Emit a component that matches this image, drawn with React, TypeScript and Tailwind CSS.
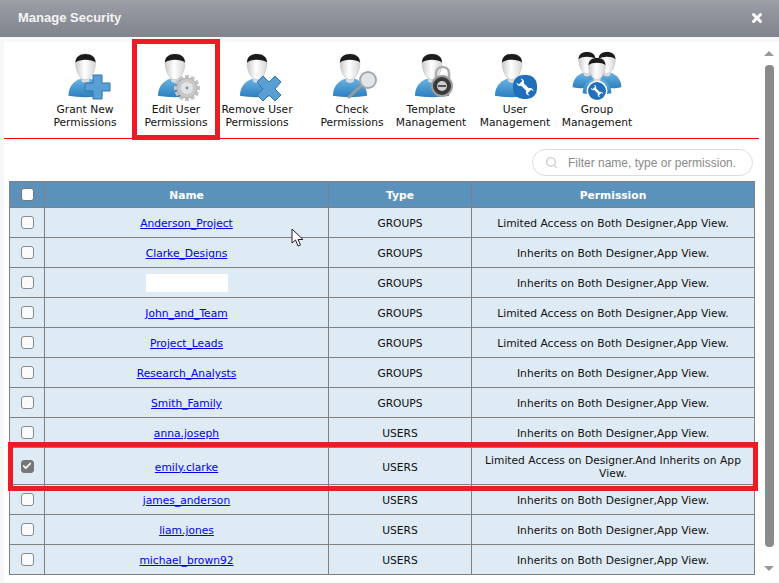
import { Search, Check, X } from 'lucide-react';
import type { ReactNode } from 'react';

const rows = [
  { name: 'Anderson_Project', type: 'GROUPS', permission: 'Limited Access on Both Designer,App View.' },
  { name: 'Clarke_Designs', type: 'GROUPS', permission: 'Inherits on Both Designer,App View.' },
  { name: '', type: 'GROUPS', permission: 'Inherits on Both Designer,App View.' },
  { name: 'John_and_Team', type: 'GROUPS', permission: 'Limited Access on Both Designer,App View.' },
  { name: 'Project_Leads', type: 'GROUPS', permission: 'Limited Access on Both Designer,App View.' },
  { name: 'Research_Analysts', type: 'GROUPS', permission: 'Inherits on Both Designer,App View.' },
  { name: 'Smith_Family', type: 'GROUPS', permission: 'Inherits on Both Designer,App View.' },
  { name: 'anna.joseph', type: 'USERS', permission: 'Inherits on Both Designer,App View.' },
  { name: 'emily.clarke', type: 'USERS', permission: 'Limited Access on Designer.And Inherits on App View.', checked: true },
  { name: 'james_anderson', type: 'USERS', permission: 'Inherits on Both Designer,App View.' },
  { name: 'liam.jones', type: 'USERS', permission: 'Inherits on Both Designer,App View.' },
  { name: 'michael_brown92', type: 'USERS', permission: 'Inherits on Both Designer,App View.' },
];

function Person({ x = 25, y = 5, scale = 0.95 }: { x?: number; y?: number; scale?: number }) {
  return (
    <g transform={`translate(${x} ${y}) scale(${scale})`}>
      <path d="M-18 44 C-18 32 -9 26 0 25 C9 26 18 32 18 44 C8 46 -8 46 -18 44Z" fill="url(#personBlue)" />
      <path d="M-5 20 L-4 29 C-2 31 2 31 4 29 L5 20Z" fill="#d9dcdf" />
      <path d="M-10.5 9 C-10.5 3 -6 0 0 0 C6 0 10.5 3 10.5 9 C10.5 18 6 27 0 27 C-6 27 -10.5 18 -10.5 9Z" fill="url(#personHead)" stroke="#b5b5b5" strokeWidth="0.5" />
      <path d="M-10.5 9 C-10.5 3 -6 0 0 0 C6 0 10.5 3 10.5 9 C6 5 -6 5 -10.5 9Z" fill="#1d1a1a" />
    </g>
  );
}

function Defs() {
  return (
    <defs>
      <linearGradient id="personBlue" x1="0" y1="0" x2="0" y2="1">
        <stop offset="0" stopColor="#6fb4e2" />
        <stop offset="1" stopColor="#2a7fc0" />
      </linearGradient>
      <linearGradient id="personHead" x1="0" y1="0" x2="1" y2="0">
        <stop offset="0" stopColor="#c9cbcc" />
        <stop offset="0.45" stopColor="#ffffff" />
        <stop offset="1" stopColor="#d5d6d7" />
      </linearGradient>
    </defs>
  );
}

function IconBox({ children }: { children: ReactNode }) {
  return (
    <svg width="54" height="50" viewBox="0 0 54 50" className="mx-auto block overflow-visible">
      <Defs />
      {children}
    </svg>
  );
}

function Wrench({ cx, cy, s }: { cx: number; cy: number; s: number }) {
  return (
    <g transform={`translate(${cx} ${cy}) rotate(-45) scale(${s})`}>
      <path
        d="M-2 -4 C-5 -5 -5 -9 -3 -10 L-3 -7 L3 -7 L3 -10 C5 -9 5 -5 2 -4 L2 4 C5 5 5 9 3 10 L3 7 L-3 7 L-3 10 C-5 9 -5 5 -2 4Z"
        fill="#fff"
      />
    </g>
  );
}

const gearTeeth = [0, 30, 60, 90, 120, 150, 180, 210, 240, 270, 300, 330];

const icons: Record<string, ReactNode> = {
  grant: (
    <IconBox>
      <Person x={27.5} />
      <path d="M35 26 H44 V34 H52 V42 H44 V50 H35 V42 H27 V34 H35Z" fill="#5a9fd4" stroke="#2f76ad" strokeWidth="1" />
    </IconBox>
  ),
  edit: (
    <IconBox>
      <Person x={26} />
      {gearTeeth.map((a) => (
        <rect key={a} x="36" y="26" width="4" height="4" fill="#c4c4c4" transform={`rotate(${a} 38 39)`} />
      ))}
      <circle cx="38" cy="39" r="10" fill="#c9c9c9" stroke="#a9a9a9" strokeWidth="0.8" />
      <circle cx="38" cy="39" r="6" fill="#e4e4e4" />
      <circle cx="38" cy="39" r="1.4" fill="#6a93b8" />
    </IconBox>
  ),
  remove: (
    <IconBox>
      <Person x={27} />
      <path d="M33 27 L39 33 L45 27 L51 33 L45 40 L51 46 L45 52 L39 46 L33 52 L27 46 L33 40 L27 33Z" fill="#5a9fd4" stroke="#2f76ad" strokeWidth="1" />
    </IconBox>
  ),
  check: (
    <IconBox>
      <Person x={25} />
      <path d="M24 48 L36 37" stroke="#9a9a9a" strokeWidth="3" strokeLinecap="round" />
      <circle cx="43" cy="31" r="8" fill="#dfe6ec" stroke="#a8a8a8" strokeWidth="2" />
    </IconBox>
  ),
  template: (
    <IconBox>
      <Person x={28} />
      <path d="M32 30 V24 C32 16 45 16 45 24 V30" fill="none" stroke="#aeaeae" strokeWidth="2.5" />
      <circle cx="38" cy="37" r="10" fill="#3a3a3a" stroke="#9d9d9d" strokeWidth="2" />
      <circle cx="38" cy="37" r="5" fill="#cfcfcf" />
      <rect x="34" y="36" width="8" height="2" fill="#555" />
    </IconBox>
  ),
  user: (
    <IconBox>
      <Person x={24} />
      <rect x="25" y="26" width="24" height="24" rx="10" fill="#1f6fbb" />
      <Wrench cx={37} cy={38} s={0.9} />
    </IconBox>
  ),
  group: (
    <IconBox>
      <Person x={17} y={3} scale={0.8} />
      <Person x={37} y={3} scale={0.8} />
      <Person x={27} y={9} scale={0.8} />
      <circle cx="27" cy="42" r="10.5" fill="#fff" />
      <circle cx="27" cy="42" r="9" fill="#1f6fbb" />
      <Wrench cx={27} cy={42} s={0.65} />
    </IconBox>
  ),
};

const tools = [
  { icon: 'grant', label: ['Grant New', 'Permissions'], ml: 'ml-0' },
  { icon: 'edit', label: ['Edit User', 'Permissions'], ml: 'ml-[15px]' },
  { icon: 'remove', label: ['Remove User', 'Permissions'], ml: 'ml-[5px]' },
  { icon: 'check', label: ['Check', 'Permissions'], ml: 'ml-[19px]' },
  { icon: 'template', label: ['Template', 'Management'], ml: 'ml-[3px]' },
  { icon: 'user', label: ['User', 'Management'], ml: 'ml-[8px]' },
  { icon: 'group', label: ['Group', 'Management'], ml: 'ml-[6px]' },
];

function Box({ checked, white }: { checked?: boolean; white?: boolean }) {
  return (
    <span
      className={`mx-auto flex h-[13px] w-[13px] items-center justify-center rounded-[3px] border-[1.5px] ${
        checked ? 'border-[#777] bg-[#777]' : white ? 'border-[#777] bg-white' : 'border-[#8a8a8a] bg-[#f8fafc]'
      }`}
    >
      {checked && <Check size={10} strokeWidth={4} className="text-white" />}
    </span>
  );
}

export default function App() {
  return (
    <div className="relative h-[583px] w-[779px] overflow-hidden bg-[#f7f7f7] font-['DejaVu_Sans',sans-serif] text-[10.7px] text-[#111]">
      <header className="flex h-[37px] items-center justify-between bg-gradient-to-b from-[#9b9ea5] to-[#80848d] pb-[2px] pl-[18px] pr-[15px]">
        <h1 className="font-['Liberation_Sans',sans-serif] text-[13px] font-bold text-[#f4f4f4]">Manage Security</h1>
        <X size={14} strokeWidth={5} className="text-white" />
      </header>

      <div className="mt-[5px] flex">
        <main className="ml-[4px] h-[540px] w-[755px] bg-white">
          <div className="flex h-[96px] pl-[43px] pt-[7px] leading-[13px]">
            {tools.map((t) => (
              <div key={t.icon} className={`w-[76px] shrink-0 text-center ${t.ml}`}>
                {icons[t.icon]}
                <div className="mt-[4px] whitespace-nowrap">
                  {t.label[0]}
                  <br />
                  {t.label[1]}
                </div>
              </div>
            ))}
          </div>
          <div className="h-px bg-[#ff0000]" />

          <div className="flex justify-end pr-[6px] pt-[10px]">
            <div className="flex h-[27px] w-[221px] items-center rounded-full border border-[#dcdcdc] pl-[12px] font-['Liberation_Sans',sans-serif] text-[12px] text-[#8a8a8a]">
              <Search size={13} strokeWidth={2.5} className="text-[#cfcfcf]" />
              <span className="ml-[10px]">Filter name, type or permission.</span>
            </div>
          </div>

          <table className="ml-[5px] mt-[5px] w-[745px] table-fixed border-collapse border border-[#808080] text-center leading-[13px]">
            <colgroup>
              <col className="w-[35px]" />
              <col className="w-[284px]" />
              <col className="w-[143px]" />
              <col className="w-[283px]" />
            </colgroup>
            <thead>
              <tr className="h-[26px] bg-[#5b92bb] font-bold text-white">
                <th className="border border-[#808080]">
                  <Box white />
                </th>
                <th className="border border-[#808080] pt-[2px]">Name</th>
                <th className="border border-[#808080] pt-[2px]">Type</th>
                <th className="border border-[#808080] pt-[2px]">Permission</th>
              </tr>
            </thead>
            <tbody>
              {rows.map((r) => (
                <tr key={r.name || 'hidden'} className={`bg-[#deeaf4] ${r.checked ? 'h-[37px]' : 'h-[30px]'}`}>
                  <td className="border border-[#808080]">
                    <Box checked={r.checked} />
                  </td>
                  <td className="border border-[#808080] pt-[2px]">
                    {r.name ? (
                      <a href="#" className="text-[#0000ee] underline">
                        {r.name}
                      </a>
                    ) : (
                      <span className="mx-auto mb-[2px] block h-[18px] w-[82px] bg-white" />
                    )}
                  </td>
                  <td className="border border-[#808080] pt-[2px]">{r.type}</td>
                  <td className="border border-[#808080] px-[6px] pt-[2px]">{r.permission}</td>
                </tr>
              ))}
            </tbody>
          </table>
        </main>

        <div className="flex h-[540px] w-[20px] flex-col items-center bg-white">
          <span className="mt-[9px] h-0 w-0 border-x-[5px] border-b-[5px] border-x-transparent border-b-[#999]" />
          <span className="mt-[9px] h-[482px] w-[9px] rounded-[4px] bg-[#8a8a8a]" />
          <span className="mt-[19px] h-0 w-0 border-x-[5px] border-t-[5px] border-x-transparent border-t-[#999]" />
        </div>
      </div>

      {/* red annotation boxes and the mouse pointer sit over the page */}
      <div className="pointer-events-none absolute left-[132px] top-[39px] h-[101px] w-[88px] border-[5px] border-[#ed1c24]" />
      <div className="pointer-events-none absolute left-[8px] top-[442px] h-[49px] w-[750px] border-[5px] border-[#ed1c24]" />
      <svg width="14" height="20" viewBox="0 0 14 20" className="pointer-events-none absolute left-[291px] top-[228px]">
        <path d="M1 1 V15 L4.5 12 L7 18 L9.5 17 L7 11.5 H12Z" fill="#fff" stroke="#222" strokeWidth="1" />
      </svg>
    </div>
  );
}
